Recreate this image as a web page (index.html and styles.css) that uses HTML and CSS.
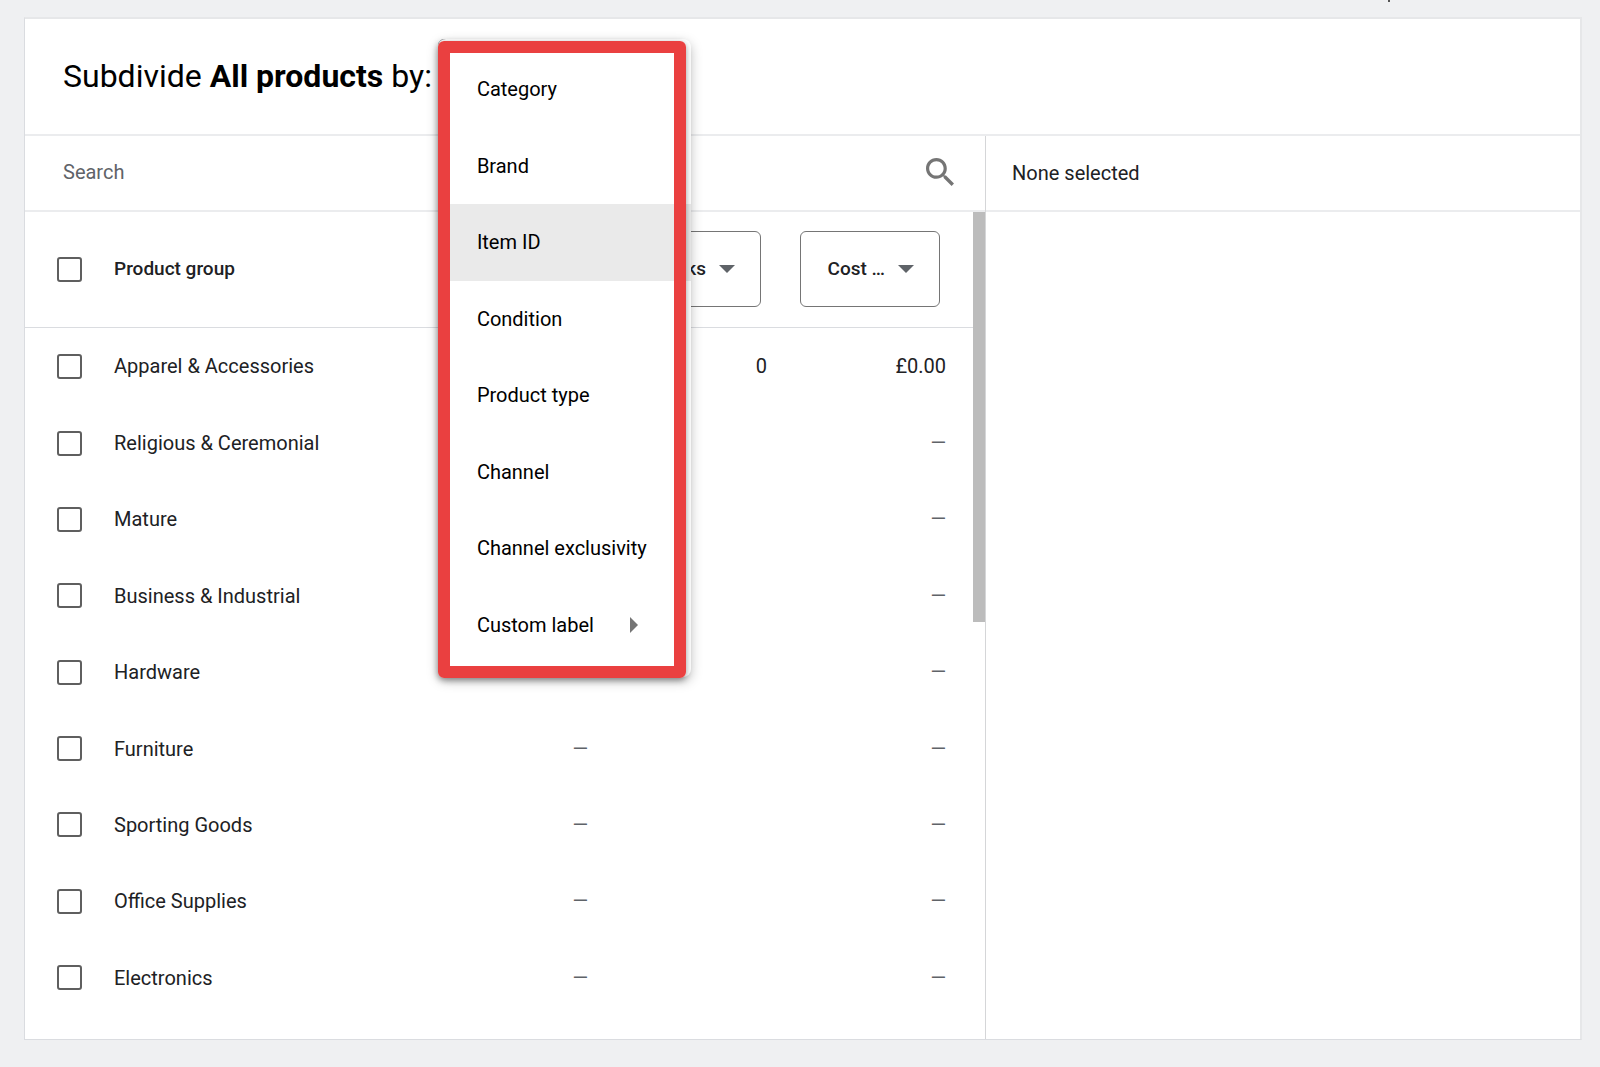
FILE: index.html
```html
<!DOCTYPE html>
<html lang="en">
<head>
	<meta charset="UTF-8">
	<title>Subdivide All products</title>
	<link rel="stylesheet" href="styles.css">
</head>
<body>
	<span class="page-mark"></span>
	<div class="card">
		<div class="card-header">
			<h1>Subdivide <strong>All products</strong> by:</h1>
			<div class="picker">
				<button type="button" class="picker-btn" aria-label="Subdivide by" aria-haspopup="menu"></button>
				<div class="menu" role="menu">
					<button type="button" role="menuitem">Category</button>
					<button type="button" role="menuitem">Brand</button>
					<button type="button" role="menuitem" class="selected">Item ID</button>
					<button type="button" role="menuitem">Condition</button>
					<button type="button" role="menuitem">Product type</button>
					<button type="button" role="menuitem">Channel</button>
					<button type="button" role="menuitem">Channel exclusivity</button>
					<button type="button" role="menuitem">Custom label
						<svg class="more" viewBox="0 0 8 16"><path d="M0 0l8 8-8 8z"/></svg>
					</button>
				</div>
				<!-- red highlight over the menu -->
				<div class="highlight"></div>
			</div>
		</div>

		<div class="panes">
			<div class="left">
				<div class="bar search">
					<input type="text" placeholder="Search" aria-label="Search">
					<button type="button" class="search-btn" aria-label="Search">
						<svg viewBox="3 3 17.5 17.5"><path d="M15.5 14h-.79l-.28-.27C15.41 12.59 16 11.11 16 9.5 16 5.91 13.09 3 9.5 3S3 5.91 3 9.5 5.91 16 9.5 16c1.61 0 3.09-.59 4.23-1.57l.27.28v.79l5 4.99L20.49 19l-4.99-5zm-6 0C7.01 14 5 11.99 5 9.5S7.01 5 9.5 5 14 7.01 14 9.5 11.99 14 9.5 14z"/></svg>
					</button>
				</div>
				<div class="list">
					<table>
						<thead>
							<tr>
								<th class="check"><input type="checkbox" aria-label="Select all"></th>
								<th class="name">Product group</th>
								<th class="num"></th>
								<th class="num">
									<div class="metric">
										<select aria-label="First metric"><option>Clicks</option></select>
									</div>
								</th>
								<th class="num">
									<div class="metric">
										<select aria-label="Second metric"><option>Cost …</option></select>
									</div>
								</th>
							</tr>
						</thead>
						<tbody>
							<tr>
								<td class="check"><input type="checkbox" id="g1"></td>
								<td><label for="g1">Apparel &amp; Accessories</label></td>
								<td class="num"></td><td class="num">0</td><td class="num">£0.00</td>
							</tr>
							<tr>
								<td class="check"><input type="checkbox" id="g2"></td>
								<td><label for="g2">Religious &amp; Ceremonial</label></td>
								<td class="num"></td><td class="num"></td><td class="num none">—</td>
							</tr>
							<tr>
								<td class="check"><input type="checkbox" id="g3"></td>
								<td><label for="g3">Mature</label></td>
								<td class="num"></td><td class="num"></td><td class="num none">—</td>
							</tr>
							<tr>
								<td class="check"><input type="checkbox" id="g4"></td>
								<td><label for="g4">Business &amp; Industrial</label></td>
								<td class="num"></td><td class="num"></td><td class="num none">—</td>
							</tr>
							<tr>
								<td class="check"><input type="checkbox" id="g5"></td>
								<td><label for="g5">Hardware</label></td>
								<td class="num"></td><td class="num"></td><td class="num none">—</td>
							</tr>
							<tr>
								<td class="check"><input type="checkbox" id="g6"></td>
								<td><label for="g6">Furniture</label></td>
								<td class="num none">—</td><td class="num"></td><td class="num none">—</td>
							</tr>
							<tr>
								<td class="check"><input type="checkbox" id="g7"></td>
								<td><label for="g7">Sporting Goods</label></td>
								<td class="num none">—</td><td class="num"></td><td class="num none">—</td>
							</tr>
							<tr>
								<td class="check"><input type="checkbox" id="g8"></td>
								<td><label for="g8">Office Supplies</label></td>
								<td class="num none">—</td><td class="num"></td><td class="num none">—</td>
							</tr>
							<tr>
								<td class="check"><input type="checkbox" id="g9"></td>
								<td><label for="g9">Electronics</label></td>
								<td class="num none">—</td><td class="num"></td><td class="num none">—</td>
							</tr>
						</tbody>
					</table>
					<div class="scrollbar"><div class="thumb"></div></div>
				</div>
			</div>
			<div class="right">
				<div class="bar">None selected</div>
			</div>
		</div>
	</div>
</body>
</html>
```
FILE: styles.css
```css
*{
	margin: 0;
	padding: 0;
	box-sizing: border-box;
}
body{
	background: #eff0f2;
	font-family: Roboto, "Liberation Sans", sans-serif;
	font-size: 20px;
	line-height: 24px;
	color: #202124;
	padding: 17px 18px 26px 24px;
}
button, input, select{
	font: inherit;
	color: inherit;
	border: none;
	background: none;
}

/* tail of the text scrolled out above the card */
.page-mark{
	position: absolute;
	top: 0;
	left: 1388px;
	width: 2px;
	height: 2px;
	background: #555;
}

.card{
	background: #fff;
	border: 2px solid #e6e7e9;
	border-left-width: 1px;
	border-bottom-width: 1px;
	border-left-color: #dadce0;
	border-bottom-color: #dadce0;
}
.card-header{
	display: flex;
	align-items: flex-start;
	height: 117px;
	padding: 20px 38px;
	border-bottom: 2px solid #ebecee;
}
h1{
	font-size: 32px;
	line-height: 40px;
	font-weight: 400;
	color: #000;
	padding-top: 17px;
}
h1 strong{
	font-weight: 700;
}

/* drop-down */
.picker{
	position: relative;
	margin-left: 6px;
}
.picker-btn{
	display: block;
	width: 240px;
	height: 76px;
	border: 1px solid #80868b;
	border-radius: 6px;
}
.menu{
	position: absolute;
	z-index: 1;
	top: 0;
	left: 0;
	width: 253px;
	height: 638px;
	padding: 12px 0 14px;
	display: grid;
	grid-auto-rows: 1fr;
	background: #fff;
	border-radius: 8px;
	box-shadow: 0 4px 12px rgba(0,0,0,.25);
}
.menu button{
	display: flex;
	align-items: center;
	padding-left: 39px;
	color: #000;
	text-align: left;
}
.menu .selected{
	background: #eaeaea;
}
.more{
	width: 8px;
	height: 16px;
	margin-left: 36px;
	fill: #757575;
}
.highlight{
	position: absolute;
	z-index: 2;
	top: 2px;
	left: 0;
	width: 248px;
	height: 637px;
	border: 12px solid #ea4040;
	border-radius: 6px;
	box-shadow: 0 2px 6px rgba(0,0,0,.4);
	pointer-events: none;
}

.panes{
	display: grid;
	grid-template-columns: 1.618fr 1fr;
}
.left{
	border-right: 1px solid #d5d6d8;
}
.bar{
	display: flex;
	align-items: center;
	height: 76px;
	border-bottom: 2px solid #ebecee;
}
.search{
	padding: 0 31px 2px 38px;
}
.search input{
	flex: 1;
	height: 40px;
	outline: none;
}
.search input::placeholder{
	color: #5f6368;
	opacity: 1;
}
.search-btn{
	width: 28px;
	height: 28px;
}
.search-btn svg{
	display: block;
	fill: #757575;
}
.right .bar{
	padding-left: 26px;
}

/* product groups */
.list{
	display: flex;
	align-items: flex-start;
	padding-bottom: 23px;
}
table{
	flex: 1;
	border-collapse: collapse;
	table-layout: fixed;
	height: 804px;
}
thead tr{
	height: 115px;
}
th{
	border-bottom: 1px solid #dadce0;
	text-align: left;
	font-size: 19px;
	font-weight: 500;
}
.check{
	width: 89px;
	padding-left: 32px;
}
.check input{
	display: block;
	appearance: none;
	width: 25px;
	height: 25px;
	border: 2px solid #5f5f5f;
	border-radius: 3px;
}
.num{
	width: 179px;
	padding-right: 27px;
	text-align: right;
}
th.num{
	padding-right: 33px;
}
.none{
	color: #5f6368;
}
.metric{
	position: relative;
	width: 140px;
	margin-left: auto;
}
.metric select{
	display: block;
	appearance: none;
	width: 100%;
	height: 76px;
	padding-right: 54px;
	text-align: right;
	text-align-last: right;
	border: 1px solid #757575;
	border-radius: 6px;
}
.metric::after{
	content: "";
	position: absolute;
	top: 34px;
	right: 26px;
	border: 8px solid transparent;
	border-top-color: #5f6368;
	border-bottom: none;
	pointer-events: none;
}
.scrollbar{
	width: 12px;
}
.thumb{
	height: 410px;
	background: #bcbcbc;
}
```
